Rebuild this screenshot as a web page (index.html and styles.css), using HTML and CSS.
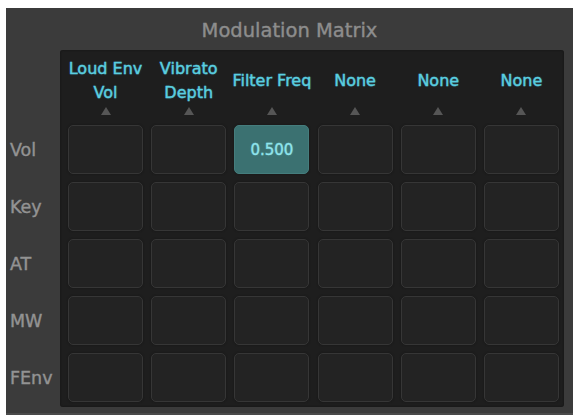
FILE: index.html
```html
<!DOCTYPE html>
<html lang="en">
  <head>
    <meta charset="UTF-8" />
    <title>Modulation Matrix</title>
    <link rel="stylesheet" href="styles.css">
  </head>
  <body>
    <div class="panel">
      <div class="title">Modulation Matrix</div>
      <div class="matrix-area">
        <div class="row-labels">
          <div class="label-spacer"></div>
          <div class="row-label">Vol</div>
          <div class="row-label">Key</div>
          <div class="row-label">AT</div>
          <div class="row-label">MW</div>
          <div class="row-label">FEnv</div>
        </div>
        <div class="matrix">
          <div class="head"><div class="head-text">Loud Env<br>Vol</div><span class="arrow"></span></div>
          <div class="head"><div class="head-text">Vibrato<br>Depth</div><span class="arrow"></span></div>
          <div class="head"><div class="head-text">Filter Freq</div><span class="arrow"></span></div>
          <div class="head"><div class="head-text">None</div><span class="arrow"></span></div>
          <div class="head"><div class="head-text">None</div><span class="arrow"></span></div>
          <div class="head"><div class="head-text">None</div><span class="arrow"></span></div>

          <div class="cell"></div>
          <div class="cell"></div>
          <div class="cell active">0.500</div>
          <div class="cell"></div>
          <div class="cell"></div>
          <div class="cell"></div>

          <div class="cell"></div>
          <div class="cell"></div>
          <div class="cell"></div>
          <div class="cell"></div>
          <div class="cell"></div>
          <div class="cell"></div>

          <div class="cell"></div>
          <div class="cell"></div>
          <div class="cell"></div>
          <div class="cell"></div>
          <div class="cell"></div>
          <div class="cell"></div>

          <div class="cell"></div>
          <div class="cell"></div>
          <div class="cell"></div>
          <div class="cell"></div>
          <div class="cell"></div>
          <div class="cell"></div>

          <div class="cell"></div>
          <div class="cell"></div>
          <div class="cell"></div>
          <div class="cell"></div>
          <div class="cell"></div>
          <div class="cell"></div>
        </div>
      </div>
    </div>
  </body>
</html>
```

FILE: styles.css
```css
* {
  margin: 0;
  padding: 0;
  box-sizing: border-box;
  font-family: "DejaVu Sans", sans-serif;
}

body {
  background: #ffffff;
  width: 573px;
  height: 415px;
  overflow: hidden;
}

.panel {
  margin: 8px 0 0 6px;
  width: 567px;
  height: 407px;
  background: #3b3b3b;
  border-bottom: 2px solid #4a4a4a;
  display: flex;
  flex-direction: column;
}

.title {
  height: 42px;
  display: flex;
  align-items: center;
  justify-content: center;
  padding-top: 2px;
  color: #8d8d8d;
  font-size: 19.5px;
  -webkit-text-stroke: 0.4px #8d8d8d;
}

.matrix-area {
  display: flex;
}

.row-labels {
  width: 54px;
  display: flex;
  flex-direction: column;
  gap: 8px;
}

.label-spacer {
  height: 67px;
}

.row-label {
  height: 49px;
  display: flex;
  align-items: center;
  padding-left: 4px;
  color: #939393;
  font-size: 17.5px;
  -webkit-text-stroke: 0.4px #939393;
}

.matrix {
  width: 504px;
  height: 357px;
  background: #1e1e1e;
  border-radius: 3px;
  box-shadow: inset 0 0 2px #111;
  padding: 0 5px 0 8px;
  display: grid;
  grid-template-columns: repeat(6, 75px);
  grid-template-rows: 67px repeat(5, 49px);
  column-gap: 8.2px;
  row-gap: 8px;
  align-content: start;
}

.head {
  display: flex;
  flex-direction: column;
  align-items: center;
  padding-top: 7px;
}

.head-text {
  height: 48px;
  display: flex;
  align-items: center;
  text-align: center;
  white-space: nowrap;
  color: #5acfe0;
  font-size: 16px;
  line-height: 24px;
  -webkit-text-stroke: 0.4px #5acfe0;
  text-shadow: 0 0 2px rgba(86, 201, 218, 0.4);
}

.arrow {
  margin-top: 2px;
  width: 0;
  height: 0;
  border-left: 5px solid transparent;
  border-right: 5px solid transparent;
  border-bottom: 8px solid #565656;
}

.cell {
  background: #232323;
  border: 1.5px solid #363636;
  border-radius: 5px;
  box-shadow: 0 0 2px #151515;
}

.cell.active {
  background: #3b7171;
  border-color: #457d7d;
  display: flex;
  align-items: center;
  justify-content: center;
  color: #8fe4ec;
  font-size: 15px;
  -webkit-text-stroke: 0.3px #8fe4ec;
  text-shadow: 0 0 2px rgba(143, 228, 236, 0.4);
}
```
